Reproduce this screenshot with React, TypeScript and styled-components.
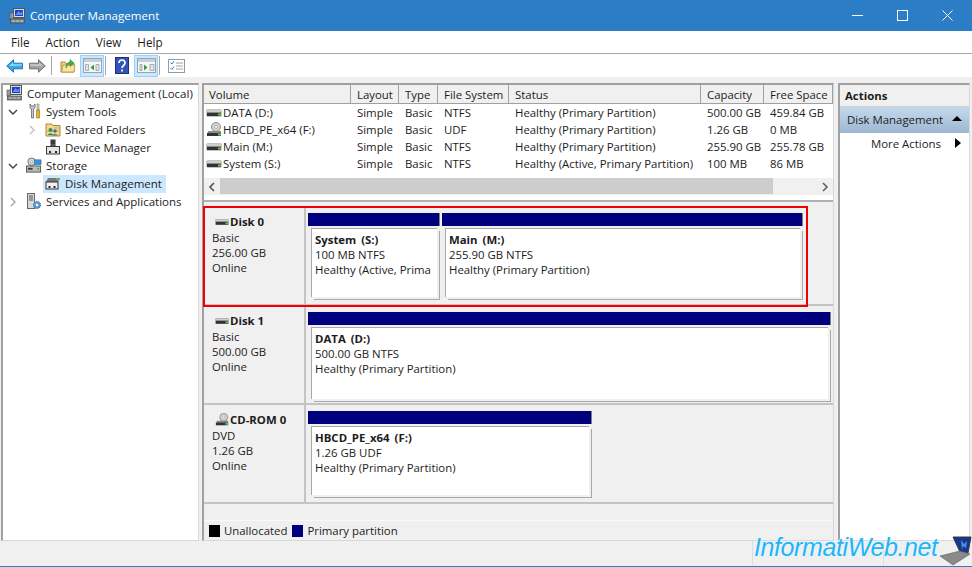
import React from 'react';
import styled, { createGlobalStyle } from 'styled-components';

const GlobalStyle = createGlobalStyle`
  html, body { margin: 0; padding: 0; background: #f0f0f0; }
  * { box-sizing: border-box; }
  body { font-family: "Open Sans", "Noto Sans", sans-serif; font-size: 11.4px; color: #1c1c1c; }
`;

const Window = styled.div`
  position: relative;
  width: 972px;
  height: 567px;
  overflow: hidden;
  display: flex;
  flex-direction: column;
  background: #f0f0f0;
  border-bottom: 1px solid #2b7dc6;
`;

const TitleBar = styled.div`
  height: 31px;
  flex: none;
  display: flex;
  align-items: center;
  padding: 0 19px 0 9px;
  gap: 4px;
  background: #2b7dc6;
  color: #fff;
  font-size: 11.6px;
`;

const TitleText = styled.span`
  flex: 1;
`;

const WindowButtons = styled.div`
  display: flex;
  align-items: center;
  gap: 34px;
`;

const MenuBar = styled.div`
  height: 23px;
  flex: none;
  display: flex;
  align-items: center;
  padding: 0 0 1px 11px;
  gap: 16px;
  background: #fff;
  border-bottom: 1px solid #a9a9a9;
  font-size: 11.7px;
`;

const ToolBar = styled.div`
  height: 23px;
  flex: none;
  display: flex;
  align-items: center;
  padding-left: 4px;
  background: #fff;
`;

const ToolButton = styled.div<{ $w: number; $on?: boolean }>`
  width: ${p => p.$w}px;
  height: 22px;
  display: flex;
  align-items: center;
  justify-content: center;
  background: ${p => (p.$on ? '#cce8ff' : 'transparent')};
  border: 1px solid ${p => (p.$on ? '#99d1ff' : 'transparent')};
`;

const ToolSep = styled.div`
  width: 1px;
  height: 19px;
  margin: 0 3px 0 1px;
  background: #a8a8a8;
`;

const Body = styled.div`
  flex: 1;
  min-height: 0;
  display: flex;
  gap: 3px;
  padding: 6px 2px 25px 1px;
`;

const Pane = styled.div<{ $w?: number }>`
  ${p => (p.$w ? `width: ${p.$w}px; flex: none;` : 'flex: 1; min-width: 0;')}
  display: flex;
  flex-direction: column;
  background: #fff;
  border: 1px solid #d8d8d8;
  border-top: 2px solid #a0a0a0;
  border-left: 2px solid #a0a0a0;
`;

const ActionsPane = styled(Pane)`
  margin-left: 1px;
`;

const TreeRow = styled.div<{ $level: number }>`
  height: 18px;
  flex: none;
  display: flex;
  align-items: center;
  padding-left: ${p => p.$level * 19 + 3}px;
  font-size: 11.5px;
  white-space: nowrap;
`;

const Chevron = styled.span`
  width: 20px;
  flex: none;
  display: flex;
  padding-left: 2px;
`;

const TreeLabel = styled.span<{ $selected?: boolean }>`
  display: flex;
  align-items: center;
  gap: 4px;
  height: 18px;
  margin-left: -2px;
  padding: 0 4px 2px 2px;
  background: ${p => (p.$selected ? '#cce8ff' : 'transparent')};
`;

const Table = styled.div`
  display: grid;
  grid-template-columns: 147px 48px 39px 71px 192px 63px 1fr;
  align-items: center;
`;

const HeadCell = styled.div`
  height: 19px;
  display: flex;
  align-items: center;
  padding: 1px 0 0 6px;
  background: #f0f0f0;
  border-right: 1px solid #a0a0a0;
  border-bottom: 1px solid #a0a0a0;
  white-space: nowrap;
  &:first-child { padding-left: 5px; }
`;

const Cell = styled.div`
  height: 17px;
  display: flex;
  align-items: center;
  padding-left: 6px;
  white-space: nowrap;
  overflow: hidden;
`;

const VolumeCell = styled(Cell)`
  gap: 1px;
  padding-left: 2px;
`;

const HScroll = styled.div`
  height: 17px;
  margin-top: 6px;
  display: flex;
  align-items: center;
  background: #f0f0f0;
`;

const ScrollArrow = styled.div`
  width: 16px;
  flex: none;
  display: flex;
  justify-content: center;
`;

const ScrollTrack = styled.div`
  flex: 1;
  height: 17px;
`;

const ScrollThumb = styled.div`
  width: 553px;
  height: 16px;
  background: #cdcdcd;
`;

const Splitter = styled.div`
  height: 12px;
  flex: none;
  background: #f0f0f0;
  border-top: 5px solid #fff;
  box-shadow: inset 0 2px 0 #b0b0b0;
`;

const DiskList = styled.div`
  flex: 1;
  min-height: 0;
  background: #f0f0f0;
`;

const DiskRow = styled.div<{ $highlight?: boolean }>`
  position: relative;
  height: 99px;
  display: flex;
  border-bottom: 2px solid #c4c4c4;
  ${p =>
    p.$highlight &&
    `&::after {
      content: '';
      position: absolute;
      z-index: 1;
      box-sizing: border-box;
      left: -1px;
      top: -1px;
      width: 605px;
      height: 101px;
      border: 2px solid #f00000;
      pointer-events: none;
    }`}
`;

const DiskInfo = styled.div`
  width: 102px;
  flex: none;
  padding: 7px 0 0 8px;
  line-height: 15px;
  background: #f0f0f0;
  border-right: 2px solid #c4c4c4;
`;

const DiskName = styled.div`
  display: flex;
  align-items: center;
  gap: 1px;
  font-weight: 700;
  margin-bottom: 1px;
  margin-left: 3px;
`;

const Partitions = styled.div`
  flex: 1;
  display: flex;
  gap: 2px;
  padding: 6px 0 0 2px;
`;

const Partition = styled.div<{ $w: number }>`
  width: ${p => p.$w}px;
  flex: none;
`;

const PartitionHead = styled.div`
  height: 13px;
  background: #00007f;
  border-right: 1px solid #808080;
`;

const PartitionBody = styled.div<{ $h: number }>`
  height: ${p => p.$h}px;
  margin: 2px 3px 0 3px;
  padding: 3px 3px 0;
  line-height: 15px;
  background: #fff;
  border-top: 1px solid #a8a8a8;
  border-left: 1px solid #a8a8a8;
  box-shadow: 2px 2px 0 #f0f0f0, 3px 3px 0 #a8a8a8;
  white-space: nowrap;
`;

const PartitionName = styled.div`
  font-weight: 700;
  word-spacing: 2px;
`;

const Legend = styled.div`
  height: 20px;
  flex: none;
  display: flex;
  align-items: center;
  gap: 4px;
  padding-left: 5px;
  background: #f0f0f0;
  border-top: 1px solid #fafafa;
`;

const Swatch = styled.span<{ $c: string }>`
  width: 11px;
  height: 12px;
  background: ${p => p.$c};
`;

const LegendText = styled.span`
  margin-right: 1px;
`;

const ActionsHead = styled.div`
  height: 22px;
  display: flex;
  align-items: center;
  padding-left: 5px;
  font-weight: 700;
  background: #f0f0f0;
  border-bottom: 1px solid #d0d0d0;
`;

const ActionsGroup = styled.div`
  height: 26px;
  display: flex;
  align-items: center;
  justify-content: space-between;
  padding: 0 7px 2px 7px;
  background: linear-gradient(#c4d9ec, #9db7d2);
`;

const ActionItem = styled.div`
  height: 22px;
  display: flex;
  align-items: center;
  justify-content: space-between;
  padding: 0 6px 2px 31px;
`;

const Watermark = styled.div`
  position: absolute;
  left: 754px;
  bottom: 0;
  height: 30px;
  display: flex;
  align-items: flex-start;
  gap: 2px;
  font-family: "Liberation Sans", Arial, sans-serif;
  font-style: italic;
  font-size: 25px;
  line-height: 23px;
  letter-spacing: -0.4px;
  color: #23b4f5;
  text-shadow: 0 0 2px #fff, 0 0 3px #cfeeff;
`;

const StatusDivider = styled.div<{ $x: number }>`
  position: absolute;
  left: ${p => p.$x}px;
  bottom: 1px;
  width: 1px;
  height: 24px;
  background: #dcdcdc;
`;

const ChevronIcon = ({ open, light, dark }: { open?: boolean; light?: boolean; dark?: boolean }) => (
  <svg width="10" height="10" viewBox="0 0 10 10">
    <path
      d={open ? 'M1 3l4 4 4-4' : 'M3 1l4 4-4 4'}
      fill="none"
      stroke={light ? '#c0c0c0' : dark ? '#606060' : open ? '#404040' : '#a6a6a6'}
      strokeWidth={dark ? 1.6 : 1.4}
    />
  </svg>
);

const ComputerIcon = () => (
  <svg width="17" height="16" viewBox="0 0 16 16">
    <rect x="4" y="0.5" width="11" height="9" fill="#d8dce4" stroke="#555" />
    <rect x="5.5" y="2" width="8" height="6" fill="#1f3fc0" />
    <path d="M6 7l3-4 2 2 2-2v4z" fill="#5f8df0" />
    <rect x="0.5" y="5" width="3.5" height="6" fill="#9a9a9a" stroke="#555" strokeWidth=".6" />
    <rect x="1" y="11" width="14" height="4" fill="#8d8d8d" stroke="#444" strokeWidth=".7" />
    <path d="M3 13h2M7 13h2M11 13h2" stroke="#ddd" />
  </svg>
);

const BackIcon = () => (
  <svg width="17" height="14" viewBox="0 0 17 14">
    <path d="M.7 7L7.5.8v3.4h9v5.6h-9v3.4z" fill="#3aa6e8" stroke="#1c79be" />
    <path d="M3 7l4-3.4v1.6h9v1.4z" fill="#9ad8fa" />
  </svg>
);

const ForwardIcon = () => (
  <svg width="17" height="14" viewBox="0 0 17 14">
    <path d="M16.3 7L9.5.8v3.4h-9v5.6h9v3.4z" fill="#a2a2a2" stroke="#707070" />
    <path d="M1 5.2h9V3.6L14 7H1z" fill="#c8c8c8" />
  </svg>
);

const FolderUpIcon = () => (
  <svg width="16" height="16" viewBox="0 0 16 16">
    <path d="M1 4h4l1 1.5h8V14H1z" fill="#f0d27a" stroke="#b08a3a" />
    <path d="M1.5 14L3 7h12l-1 7z" fill="#f7e19c" stroke="#b08a3a" strokeWidth=".7" />
    <path d="M6 10c0-4 2-6 4-6V1.5l4 3.5-4 3.5V6c-1.4 0-3 1.5-4 4z" fill="#3fae49" stroke="#2a7f33" strokeWidth=".5" />
  </svg>
);

const PaneIcon = ({ right }: { right?: boolean }) => (
  <svg width="19" height="15" viewBox="0 0 19 15">
    <rect x=".5" y=".5" width="18" height="14" fill="#f4f6f8" stroke="#9aa4ae" />
    <rect x="1" y="1" width="17" height="3" fill="#c4d0dc" />
    <path d={right ? 'M7 6.5l3.5 3-3.5 3z' : 'M11 6.5l-3.5 3 3.5 3z'} fill="#2f9e44" />
    <path
      d={right ? 'M13 6.5h4v6h-4zM3 6.5h2v6H3z' : 'M13 6.5h3v6h-3zM2.5 6.5h3v6h-3z'}
      fill="#dfe5ec"
      stroke="#8a949e"
      strokeWidth=".7"
    />
  </svg>
);

const HelpIcon = () => (
  <svg width="14" height="17" viewBox="0 0 14 17">
    <rect x=".5" y=".5" width="13" height="16" fill="#3552b8" stroke="#1f2f7a" />
    <path d="M4 6c0-4 6-4 6 0 0 2.5-3 2.5-3 5M7 12.5v2" fill="none" stroke="#fff" strokeWidth="1.7" />
  </svg>
);

const ChecklistIcon = () => (
  <svg width="17" height="14" viewBox="0 0 17 14">
    <rect x=".5" y=".5" width="16" height="13" fill="#fff" stroke="#9a9a9a" />
    <path d="M2.5 3.5l1.5 1.5 2-3M2.5 9l1.5 1.5 2-3" fill="none" stroke="#2f7fd0" strokeWidth="1" />
    <path d="M8 4h7M8 7h7M8 10h7" stroke="#a0a0a0" />
  </svg>
);

const ToolsIcon = () => (
  <svg width="16" height="16" viewBox="0 0 14 16">
    <path d="M3 1v4l1.5 1v9h2V6L8 5V1L6.5 3h-2z" fill="#c8c8c8" stroke="#555" strokeWidth=".7" />
    <path d="M10 1h2v6h-2z" fill="#d8d8d8" stroke="#666" strokeWidth=".5" />
    <path d="M9.5 7h3v8h-3z" fill="#e6b422" stroke="#96700c" strokeWidth=".6" />
  </svg>
);

const SharedIcon = () => (
  <svg width="16" height="16" viewBox="0 0 16 16">
    <path d="M1 3h6l1 1.5h7V15H1z" fill="#f0d88c" stroke="#a88a3c" />
    <path d="M2 10h12M9 7h5" stroke="#c8b068" />
    <circle cx="5.5" cy="9" r="2" fill="#3f8f4a" />
    <path d="M3 14c0-2 5-2 5 0z" fill="#2d6fa8" />
    <circle cx="10" cy="10" r="1.8" fill="#3f6fb0" />
    <path d="M7.5 14.5c0-2 5-2 5 0z" fill="#3f8f4a" />
  </svg>
);

const DeviceIcon = () => (
  <svg width="16" height="16" viewBox="0 0 16 16">
    <rect x="5.5" y="0.5" width="5" height="5" fill="#3a3a3a" />
    <path d="M6 5h4l1 2H5z" fill="#555" />
    <rect x="1.5" y="7.5" width="13" height="7.5" fill="#e4e4e4" stroke="#3a3a3a" />
    <path d="M4 12h2v2H4zM10 12h2v2h-2z" fill="#2a2a2a" />
  </svg>
);

const StorageIcon = () => (
  <svg width="16" height="17" viewBox="0 0 17 17">
    <circle cx="6" cy="4.5" r="4" fill="#d8d8d8" stroke="#707070" />
    <circle cx="6" cy="4.5" r="1.2" fill="#fff" stroke="#808080" strokeWidth=".6" />
    <rect x="9" y="2.5" width="7" height="5" fill="#3a94dc" stroke="#20659e" strokeWidth=".6" />
    <rect x=".5" y="9" width="15" height="6.5" fill="#bbb" stroke="#555" />
    <rect x="2" y="11" width="5" height="2" fill="#3a3a3a" />
    <rect x="12" y="11" width="2" height="2" fill="#47b04f" />
  </svg>
);

const DiskMgmtIcon = () => (
  <svg width="16" height="16" viewBox="0 0 16 16">
    <path d="M3 3h12L13 7H1z" fill="#777" />
    <rect x="11" y="3" width="4" height="2" fill="#5fb85f" />
    <rect x="1" y="7" width="12" height="7" fill="#f0f0f0" stroke="#333" />
    <path d="M3.5 11h2v2h-2zM8.5 11h2v2h-2z" fill="#222" />
  </svg>
);

const ServicesIcon = () => (
  <svg width="16" height="17" viewBox="0 0 16 17">
    <rect x="1.5" y=".5" width="7" height="15" fill="#d8d8d8" stroke="#666" />
    <path d="M3 3h4M3 5h4M3 7h4" stroke="#555" />
    <circle cx="11" cy="12" r="3.6" fill="#5c9bd0" stroke="#2e6a9e" strokeDasharray="1.4 .8" />
    <circle cx="11" cy="12" r="1.2" fill="#fff" />
  </svg>
);

const DriveIcon = ({ w = 16 }: { w?: number }) => (
  <svg width={w} height="12" viewBox="0 0 16 12">
    <rect x=".5" y="2.5" width="15" height="7" rx="1" fill="#8a8a8a" />
    <rect x="1" y="3" width="14" height="2" fill="#cfcfcf" />
    <rect x="1" y="6" width="14" height="3" fill="#333" />
    <rect x="12" y="6.5" width="3" height="2" fill="#52d052" />
  </svg>
);

const CdDriveIcon = ({ w = 16 }: { w?: number }) => (
  <svg width={w} height="15" viewBox="0 0 16 15">
    <circle cx="10" cy="5" r="4.5" fill="#d4d4d4" stroke="#8a8a8a" />
    <circle cx="10" cy="5" r="1.5" fill="#fff" stroke="#8a8a8a" strokeWidth=".6" />
    <path d="M2 9h8l5 0v5H1z" fill="#8a8a8a" />
    <rect x="1" y="11" width="14" height="3" fill="#333" />
    <rect x="12" y="11.5" width="3" height="2" fill="#52d052" />
  </svg>
);

const ArrowGlyph = ({ dir }: { dir: 'up' | 'right' | 'left' }) => {
  if (dir === 'left') {
    return (
      <svg width="10" height="10" viewBox="0 0 10 10">
        <path d="M7 1L3 5l4 4" fill="none" stroke="#505050" strokeWidth="1.6" />
      </svg>
    );
  }
  return (
    <svg width="10" height="10" viewBox="0 0 10 10">
      <path d={dir === 'up' ? 'M0 7L5 2l5 5z' : 'M2 0l6 5-6 5z'} fill="#000" />
    </svg>
  );
};

const LaptopIcon = () => (
  <svg width="32" height="30" viewBox="0 0 32 30">
    <path d="M13 1h18l-3 16-8-1z" fill="#17378f" stroke="#3a3a3a" />
    <path d="M21 4l3 4 3-3-1 7-3-2-1 4z" fill="#4f8fe0" />
    <path d="M0 20l20-5 10 3-17 11z" fill="#8a8a8a" stroke="#5a5a5a" strokeWidth=".6" />
  </svg>
);

const volumes = [
  { name: 'DATA (D:)', fs: 'NTFS', status: 'Healthy (Primary Partition)', cap: '500.00 GB', free: '459.84 GB' },
  { name: 'HBCD_PE_x64 (F:)', fs: 'UDF', status: 'Healthy (Primary Partition)', cap: '1.26 GB', free: '0 MB', cd: true },
  { name: 'Main (M:)', fs: 'NTFS', status: 'Healthy (Primary Partition)', cap: '255.90 GB', free: '255.78 GB' },
  { name: 'System (S:)', fs: 'NTFS', status: 'Healthy (Active, Primary Partition)', cap: '100 MB', free: '86 MB' },
];

const heads = ['Volume', 'Layout', 'Type', 'File System', 'Status', 'Capacity', 'Free Space'];

export default function App() {
  return (
    <Window>
      <GlobalStyle />
      <TitleBar>
        <ComputerIcon />
        <TitleText>Computer Management</TitleText>
        <WindowButtons>
          <svg width="11" height="11" viewBox="0 0 11 11"><path d="M0 5.5h11" stroke="#fff" /></svg>
          <svg width="11" height="11" viewBox="0 0 11 11"><rect x=".5" y=".5" width="10" height="10" fill="none" stroke="#fff" /></svg>
          <svg width="11" height="11" viewBox="0 0 11 11"><path d="M.5.5l10 10M10.5.5l-10 10" stroke="#fff" /></svg>
        </WindowButtons>
      </TitleBar>
      <MenuBar>
        <span>File</span>
        <span>Action</span>
        <span>View</span>
        <span>Help</span>
      </MenuBar>
      <ToolBar>
        <ToolButton $w={20}><BackIcon /></ToolButton>
        <ToolButton $w={26}><ForwardIcon /></ToolButton>
        <ToolSep />
        <ToolButton $w={25}><FolderUpIcon /></ToolButton>
        <ToolButton $w={24} $on><PaneIcon /></ToolButton>
        <ToolSep />
        <ToolButton $w={25}><HelpIcon /></ToolButton>
        <ToolButton $w={24} $on><PaneIcon right /></ToolButton>
        <ToolSep />
        <ToolButton $w={26}><ChecklistIcon /></ToolButton>
      </ToolBar>
      <Body>
        <Pane $w={198}>
          <TreeRow $level={0}><TreeLabel><ComputerIcon />Computer Management (Local)</TreeLabel></TreeRow>
          <TreeRow $level={0}><Chevron><ChevronIcon open /></Chevron><TreeLabel><ToolsIcon />System Tools</TreeLabel></TreeRow>
          <TreeRow $level={1}><Chevron><ChevronIcon light /></Chevron><TreeLabel><SharedIcon />Shared Folders</TreeLabel></TreeRow>
          <TreeRow $level={1}><Chevron /><TreeLabel><DeviceIcon />Device Manager</TreeLabel></TreeRow>
          <TreeRow $level={0}><Chevron><ChevronIcon open /></Chevron><TreeLabel><StorageIcon />Storage</TreeLabel></TreeRow>
          <TreeRow $level={1}><Chevron /><TreeLabel $selected><DiskMgmtIcon />Disk Management</TreeLabel></TreeRow>
          <TreeRow $level={0}><Chevron><ChevronIcon /></Chevron><TreeLabel><ServicesIcon />Services and Applications</TreeLabel></TreeRow>
        </Pane>
        <Pane>
          <Table>
            {heads.map(h => <HeadCell key={h}>{h}</HeadCell>)}
            {volumes.map(v => (
              <React.Fragment key={v.name}>
                <VolumeCell>{v.cd ? <CdDriveIcon /> : <DriveIcon />}{v.name}</VolumeCell>
                <Cell>Simple</Cell>
                <Cell>Basic</Cell>
                <Cell>{v.fs}</Cell>
                <Cell>{v.status}</Cell>
                <Cell>{v.cap}</Cell>
                <Cell>{v.free}</Cell>
              </React.Fragment>
            ))}
          </Table>
          <HScroll>
            <ScrollArrow><ArrowGlyph dir="left" /></ScrollArrow>
            <ScrollTrack><ScrollThumb /></ScrollTrack>
            <ScrollArrow><ChevronIcon dark /></ScrollArrow>
          </HScroll>
          <Splitter />
          <DiskList>
            <DiskRow $highlight>
              <DiskInfo>
                <DiskName><DriveIcon w={14} />Disk 0</DiskName>
                <div>Basic</div>
                <div>256.00 GB</div>
                <div>Online</div>
              </DiskInfo>
              <Partitions>
                <Partition $w={132}>
                  <PartitionHead />
                  <PartitionBody $h={69}>
                    <PartitionName>System (S:)</PartitionName>
                    <div>100 MB NTFS</div>
                    <div>Healthy (Active, Prima</div>
                  </PartitionBody>
                </Partition>
                <Partition $w={361}>
                  <PartitionHead />
                  <PartitionBody $h={69}>
                    <PartitionName>Main (M:)</PartitionName>
                    <div>255.90 GB NTFS</div>
                    <div>Healthy (Primary Partition)</div>
                  </PartitionBody>
                </Partition>
              </Partitions>
            </DiskRow>
            <DiskRow>
              <DiskInfo>
                <DiskName><DriveIcon w={14} />Disk 1</DiskName>
                <div>Basic</div>
                <div>500.00 GB</div>
                <div>Online</div>
              </DiskInfo>
              <Partitions>
                <Partition $w={523}>
                  <PartitionHead />
                  <PartitionBody $h={72}>
                    <PartitionName>DATA (D:)</PartitionName>
                    <div>500.00 GB NTFS</div>
                    <div>Healthy (Primary Partition)</div>
                  </PartitionBody>
                </Partition>
              </Partitions>
            </DiskRow>
            <DiskRow>
              <DiskInfo>
                <DiskName><CdDriveIcon w={14} />CD-ROM 0</DiskName>
                <div>DVD</div>
                <div>1.26 GB</div>
                <div>Online</div>
              </DiskInfo>
              <Partitions>
                <Partition $w={284}>
                  <PartitionHead />
                  <PartitionBody $h={69}>
                    <PartitionName>HBCD_PE_x64 (F:)</PartitionName>
                    <div>1.26 GB UDF</div>
                    <div>Healthy (Primary Partition)</div>
                  </PartitionBody>
                </Partition>
              </Partitions>
            </DiskRow>
          </DiskList>
          <Legend>
            <Swatch $c="#000" />
            <LegendText>Unallocated</LegendText>
            <Swatch $c="#00007f" />
            <LegendText>Primary partition</LegendText>
          </Legend>
        </Pane>
        <ActionsPane $w={132}>
          <ActionsHead>Actions</ActionsHead>
          <ActionsGroup>Disk Management <ArrowGlyph dir="up" /></ActionsGroup>
          <ActionItem>More Actions <ArrowGlyph dir="right" /></ActionItem>
        </ActionsPane>
      </Body>
      <StatusDivider $x={752} />
      <StatusDivider $x={883} />
      <Watermark>InformatiWeb.net <LaptopIcon /></Watermark>
    </Window>
  );
}
